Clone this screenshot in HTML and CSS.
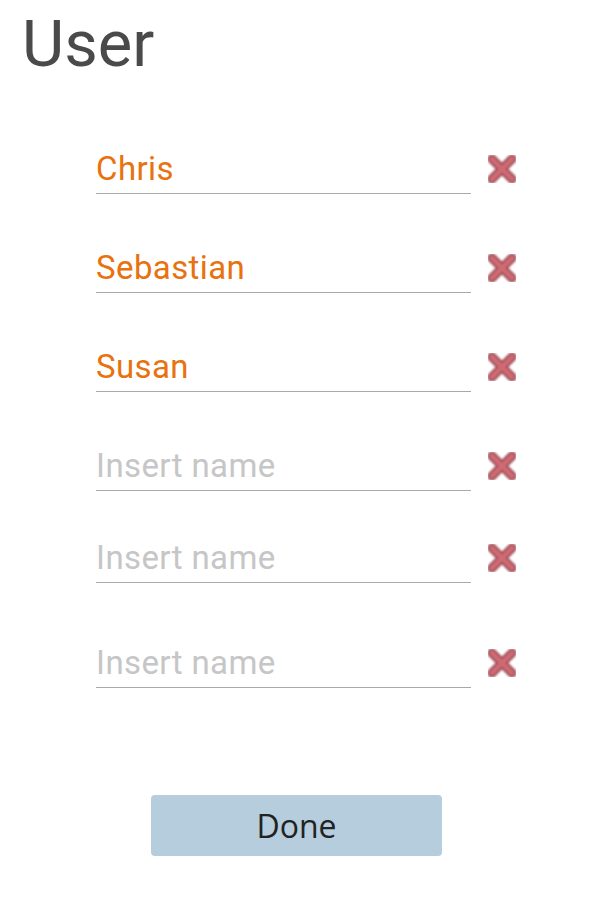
FILE: index.html
```html
<html>
	<head>
		<meta charset="utf-8">
		<meta name="viewport" content="width=device-width, initial-scale=1.0">
		<link rel="stylesheet" href="styles.css">
	</head>
	<body>
		<h1 class="title">User</h1>

		<div class="names">
			<div class="row">
				<input class="name" type="text" value="Chris" placeholder="Insert name">
				<button class="remove" title="Remove">
					<svg width="34" height="32" viewBox="0 0 34 32"><use href="#cross"/></svg>
				</button>
			</div>
			<div class="row">
				<input class="name" type="text" value="Sebastian" placeholder="Insert name">
				<button class="remove" title="Remove">
					<svg width="34" height="32" viewBox="0 0 34 32"><use href="#cross"/></svg>
				</button>
			</div>
			<div class="row">
				<input class="name" type="text" value="Susan" placeholder="Insert name">
				<button class="remove" title="Remove">
					<svg width="34" height="32" viewBox="0 0 34 32"><use href="#cross"/></svg>
				</button>
			</div>
			<div class="row">
				<input class="name" type="text" value="" placeholder="Insert name">
				<button class="remove" title="Remove">
					<svg width="34" height="32" viewBox="0 0 34 32"><use href="#cross"/></svg>
				</button>
			</div>
			<div class="row row-tight">
				<input class="name" type="text" value="" placeholder="Insert name">
				<button class="remove" title="Remove">
					<svg width="34" height="32" viewBox="0 0 34 32"><use href="#cross"/></svg>
				</button>
			</div>
			<div class="row row-loose">
				<input class="name" type="text" value="" placeholder="Insert name">
				<button class="remove" title="Remove">
					<svg width="34" height="32" viewBox="0 0 34 32"><use href="#cross"/></svg>
				</button>
			</div>
		</div>

		<div class="actions">
			<button class="done">Done</button>
		</div>

		<!-- shared cross icon -->
		<svg class="defs" width="0" height="0">
			<defs>
				<filter id="soft" x="-20%" y="-20%" width="140%" height="140%">
					<feGaussianBlur stdDeviation="0.9"/>
				</filter>
				<g id="cross" filter="url(#soft)" stroke-linecap="round">
					<path d="M7 6 L27 26 M27 6 L7 26" stroke="#9c4a52" stroke-width="9"/>
					<path d="M7 6 L27 26 M27 6 L7 26" stroke="#cf6b73" stroke-width="5"/>
				</g>
			</defs>
		</svg>
	</body>
</html>
```

FILE: styles.css
```css
body {
	margin: 0;
	padding: 0;
	background-color: #fff;
	font-family: Roboto, "Noto Sans", sans-serif;
}

.title {
	margin: 0;
	padding: 6px 0 0 22px;
	font-size: 65px;
	font-weight: normal;
	line-height: 76px;
	color: #4a4a4a;
}

.names {
	display: flex;
	flex-direction: column;
	gap: 53px;
	padding: 66px 0 0 96px;
}

.row {
	display: flex;
	align-items: flex-start;
	gap: 14px;
}

.row-tight {
	margin-top: -7px;
}

.row-loose {
	margin-top: 6px;
}

.name {
	box-sizing: content-box;
	width: 375px;
	height: 40px;
	padding: 0 0 5px 0;
	margin: 0;
	border: none;
	border-bottom: 1px solid #a9a9a9;
	outline: none;
	background: transparent;
	font-family: Roboto, "Noto Sans", sans-serif;
	font-size: 33px;
	letter-spacing: 0.4px;
	color: #e8720e;
}

.name::placeholder {
	color: #c6c6c6;
}

.remove {
	display: block;
	width: 34px;
	height: 32px;
	margin-top: 5px;
	padding: 0;
	border: none;
	background: none;
	cursor: pointer;
}

.remove svg {
	display: block;
}

.actions {
	display: flex;
	justify-content: center;
	padding-top: 107px;
}

.done {
	width: 291px;
	height: 61px;
	border: none;
	border-radius: 4px;
	background-color: #b5cddc;
	font-family: "Open Sans", "DejaVu Sans", sans-serif;
	font-size: 32px;
	color: #222;
	cursor: pointer;
}

.defs {
	position: absolute;
	width: 0;
	height: 0;
}
```
